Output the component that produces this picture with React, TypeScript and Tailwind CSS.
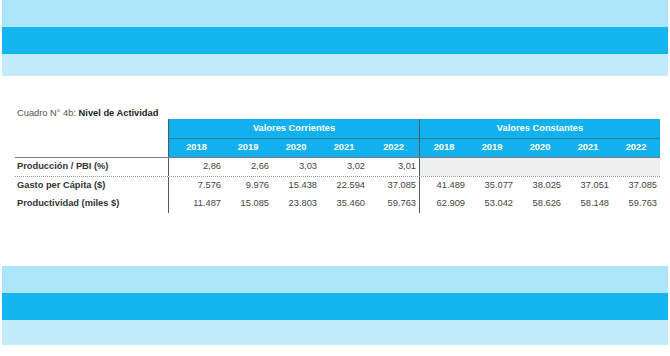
import React from 'react';

interface Row {
    label: string;
    corrientes: string[];
    constantes: string[];
    shaded?: boolean;
    dotted?: boolean;
}

const years = ['2018', '2019', '2020', '2021', '2022'];
// first and last column of "corrientes" are a bit wider
const corrWidths = ['w-[55px]', 'w-[48px]', 'w-[48px]', 'w-[48px]', 'w-[51px]'];

const rows: Row[] = [
    {
        label: 'Producción / PBI (%)',
        corrientes: ['2,86', '2,66', '3,03', '3,02', '3,01'],
        constantes: ['', '', '', '', ''],
        shaded: true,
        dotted: true,
    },
    {
        label: 'Gasto per Cápita ($)',
        corrientes: ['7.576', '9.976', '15.438', '22.594', '37.085'],
        constantes: ['41.489', '35.077', '38.025', '37.051', '37.085'],
    },
    {
        label: 'Productividad (miles $)',
        corrientes: ['11.487', '15.085', '23.803', '35.460', '59.763'],
        constantes: ['62.909', '53.042', '58.626', '58.148', '59.763'],
    },
];

const Bands: React.FC<{ last: string }> = ({ last }) => (
    <div className="mx-[2px]">
        <div className="h-[27px] bg-[#ade5fa]" />
        <div className="h-[27px] bg-[#15b5f0]" />
        <div className={`${last} bg-[#c2ecfb]`} />
    </div>
);

const App: React.FC = () => {
    return (
        <div className="w-[670px] h-[356px] bg-white overflow-hidden font-['Liberation_Sans',Arial,sans-serif] text-[9.3px]">
            <Bands last="h-[22px]" />

            {/* Title */}
            <div className="mt-[32px] ml-[17px] h-[11px] leading-[11px] text-[#555]">
                Cuadro N° 4b: <span className="font-bold text-[#222]">Nivel de Actividad</span>
            </div>

            {/* Table */}
            <div className="ml-[15px] w-[645px]">
                {/* Header */}
                <div className="flex">
                    <div className="w-[153px] shrink-0" />
                    <div className="flex flex-col border-l border-[#4f5b63] bg-[#10b1ee] text-white font-bold">
                        <div className="w-[250px] h-[19px] flex items-center justify-center">Valores Corrientes</div>
                        <div className="h-px bg-[#2a7a9c]" />
                        <div className="flex h-[18px]">
                            {years.map((y, i) => (
                                <div key={y} className={`${corrWidths[i]} flex items-center justify-center`}>{y}</div>
                            ))}
                        </div>
                    </div>
                    <div className="flex flex-col border-l border-[#4f5b63] bg-[#10b1ee] text-white font-bold">
                        <div className="w-[240px] h-[19px] flex items-center justify-center">Valores Constantes</div>
                        <div className="h-px bg-[#2a7a9c]" />
                        <div className="flex h-[18px]">
                            {years.map((y) => (
                                <div key={y} className="w-[48px] flex items-center justify-center">{y}</div>
                            ))}
                        </div>
                    </div>
                </div>
                <div className="h-px bg-[#7a7a7a]" />

                {/* Body */}
                {rows.map((r) => (
                    <div
                        key={r.label}
                        className={`flex ${r.dotted ? 'h-[19px] border-b border-dotted border-[#9a9a9a]' : 'h-[18px]'}`}
                    >
                        <div className="w-[153px] shrink-0 pl-[2px] flex items-center font-bold text-[#333]">{r.label}</div>
                        <div className="flex border-l border-[#4f5b63] text-[#444]">
                            {r.corrientes.map((v, i) => (
                                <div key={i} className={`${corrWidths[i]} pr-[3px] flex items-center justify-end`}>{v}</div>
                            ))}
                        </div>
                        <div className={`flex border-l border-[#4f5b63] text-[#444] ${r.shaded ? 'bg-[#efefef]' : ''}`}>
                            {r.constantes.map((v, i) => (
                                <div key={i} className="w-[48px] pr-[3px] flex items-center justify-end">{v}</div>
                            ))}
                        </div>
                    </div>
                ))}
            </div>

            <div className="mt-[53px]">
                <Bands last="h-[25px]" />
            </div>
        </div>
    );
};

export default App;
